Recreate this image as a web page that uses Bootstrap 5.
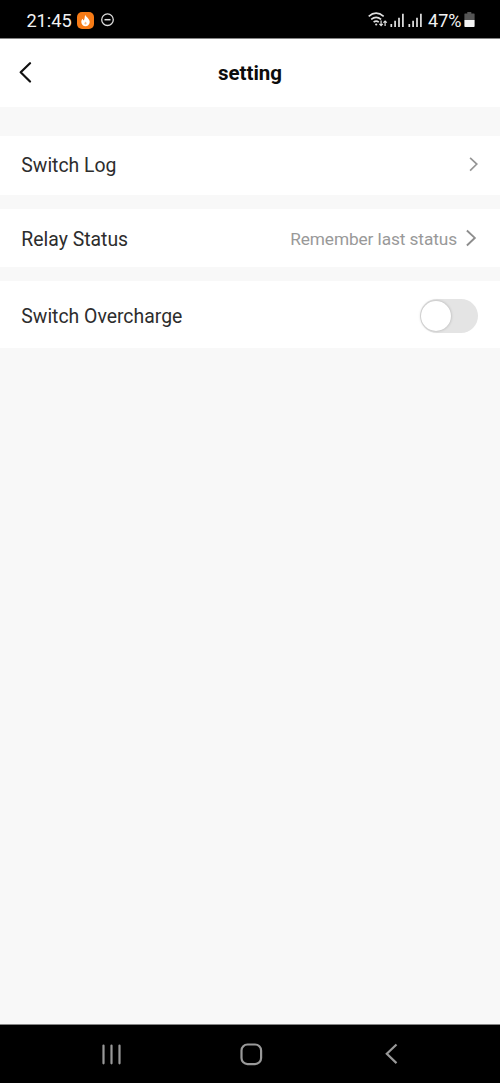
<!DOCTYPE html>
<html lang="en">
<head>
<meta charset="utf-8">
<meta name="viewport" content="width=device-width, initial-scale=1">
<title>setting</title>
<link href="https://cdn.jsdelivr.net/npm/bootstrap@5.3.0/dist/css/bootstrap.min.css" rel="stylesheet">
<style>
body{font-family:Roboto,"Liberation Sans",sans-serif;background:#f8f8f8;color:#2d2d2d;font-size:19.4px;line-height:24px;height:1083px;overflow:hidden}
svg{display:block;flex:none}
.status{height:39px;background:#000;color:#f2f2f2;border-bottom:1px solid #858585;padding:2px 25.500px 0 26.400px;font-size:18.2px}
.status .clock,.status .battery-text{padding-top:1px}
.status .clock{width:46px}
.status .battery-text{margin-left:5px;font-size:18px}
.status .app{margin-left:5px}
.status .dnd{margin-left:7px}
.status .battery{margin-left:2px}
.head{height:68px;background:#fff;color:#0c0c0c;padding:0 19px}
.head h1{font-size:20.5px;line-height:24px;font-weight:700}
.head .side{width:13px}
.item{background:#fff;padding:0 22px 0 21.3px}
.row-link{height:58px}
.row-link.first{height:59px;margin-top:29px;padding-bottom:1px}
.row-link.second{margin-top:14px}
.row-switch{height:67px;margin-top:14px;padding-top:2px}
.name{padding-top:3px}
.first .name{padding-top:2px}
.value{color:#999;font-size:17.3px;letter-spacing:-.1px;padding-top:2px}
.value-arrow{margin-left:9px}
.toggle{width:58.500px;height:34px;border-radius:17px;background:#e4e4e4;padding:0 0 0 1.500px}
.knob{width:30px;height:30px;border-radius:50%;background:#fff;box-shadow:0 0 3px rgba(0,0,0,.25)}
.navkeys{height:59px;background:#000;border-top:1px solid #858585;padding:0 102px}
.navkeys .home{margin-right:4px}
</style>
</head>
<body class="d-flex flex-column">
<div class="status d-flex align-items-center justify-content-between">
  <div class="d-flex align-items-center">
    <span class="clock">21:45</span>
    <svg class="app" width="17" height="17" viewBox="0 0 17 17"><rect width="17" height="17" rx="5" fill="#f77b16"/><path d="M8.200 2.800C8.600 5 12.700 6.500 12.700 10a4.200 4.200 0 0 1-8.400 0c0-1.500.6-2.600 1.500-3.300 0 .9.300 1.500.9 1.800C7.900 7 7.500 4.600 8.200 2.800z" fill="#fff"/><path d="M8.600 9.500c.2.700 1 1.100 1 1.900a1.100 1.100 0 0 1-2.200 0c0-.6.300-.8.600-1z" fill="#fbb883"/></svg>
    <svg class="dnd" width="14" height="14" viewBox="0 0 14 14" fill="none" stroke="#ddd" stroke-width="1.300"><circle cx="6.500" cy="6.700" r="5.800"/><path d="M3.500 6.700h6" stroke-width="1.500"/></svg>
  </div>
  <div class="d-flex align-items-center">
    <svg width="55" height="18" viewBox="0 0 55 18" fill="none" stroke="#e2e2e2" stroke-width="1.600"><path d="M.7 5.300Q8-1 15.700 5.300M3.200 8.400q4.900-4.200 9.900 0M5.600 11.200q2.600-2.200 5.200 0"/><circle cx="8.200" cy="13.500" r="1.100" fill="#ddd" stroke="none"/><path d="M13.100 9.500v5M11.400 12.900l1.700 1.700 1.700-1.700M17.100 15v-5M15.400 11.700l1.700-1.700 1.700 1.700" stroke-width="1.200"/><path d="M23.300 16v-3M27.100 16V9.800M31 16V6.700M34.900 16V2.800M41.300 16v-3M45.100 16V9.800M49 16V6.700M52.900 16V2.800" stroke-width="1.700"/></svg>
    <span class="battery-text">47%</span>
    <svg class="battery" width="11" height="16" viewBox="0 0 11 16"><path d="M3.300 0h4v1.500H10q.6 0 .6.600V8H.4V2.100q0-.6.600-.6h2.300z" fill="#555"/><path d="M.4 8h10.200v6.200q0 .8-.8.800H1.200q-.8 0-.8-.8z" fill="#f4f4f4"/></svg>
  </div>
</div>
<header class="head d-flex align-items-center justify-content-between">
  <svg width="13" height="22" viewBox="0 0 13 22" fill="none" stroke="#111" stroke-width="2.200" stroke-linecap="round" stroke-linejoin="round"><path d="M11 1.200 1.700 10.300l9.300 9.200"/></svg>
  <h1 class="mb-0">setting</h1>
  <span class="side"></span>
</header>
<main class="flex-grow-1">
  <div class="item row-link first d-flex align-items-center justify-content-between">
    <span class="name">Switch Log</span>
    <svg width="9" height="16" viewBox="0 0 9 16" fill="none" stroke="#959595" stroke-width="1.700"><path d="m1.100.9 6.700 6.200-6.700 6.600"/></svg>
  </div>
  <div class="item row-link second d-flex align-items-center">
    <span class="name me-auto">Relay Status</span>
    <span class="value">Remember last status</span>
    <svg class="value-arrow" width="12" height="18" viewBox="0 0 12 18" fill="none" stroke="#8d8d8d" stroke-width="1.900"><path d="m.9 1.500 7.900 7.400-7.900 7.600"/></svg>
  </div>
  <div class="item row-switch d-flex align-items-center justify-content-between">
    <span class="name">Switch Overcharge</span>
    <div class="toggle d-flex align-items-center" role="switch" aria-checked="false" aria-label="Switch Overcharge"><div class="knob"></div></div>
  </div>
</main>
<footer class="navkeys d-flex align-items-center justify-content-between">
  <svg width="20" height="21" viewBox="0 0 20 21" stroke="#999" stroke-width="2.200" stroke-linecap="round"><path d="M1.500 1.500v17.800M9.500 1.500v17.800M17.500 1.500v17.800"/></svg>
  <svg class="home" width="23" height="23" viewBox="0 0 23 23" fill="none" stroke="#999" stroke-width="2.200"><rect x="1.500" y="1.500" width="19.600" height="19.600" rx="6"/></svg>
  <svg width="13" height="22" viewBox="0 0 13 22" fill="none" stroke="#999" stroke-width="2.200"><path d="M11.500 1.500 1.800 10.800l9.700 9.300"/></svg>
</footer>
<script src="https://cdn.jsdelivr.net/npm/bootstrap@5.3.0/dist/js/bootstrap.bundle.min.js"></script>
</body>
</html>
